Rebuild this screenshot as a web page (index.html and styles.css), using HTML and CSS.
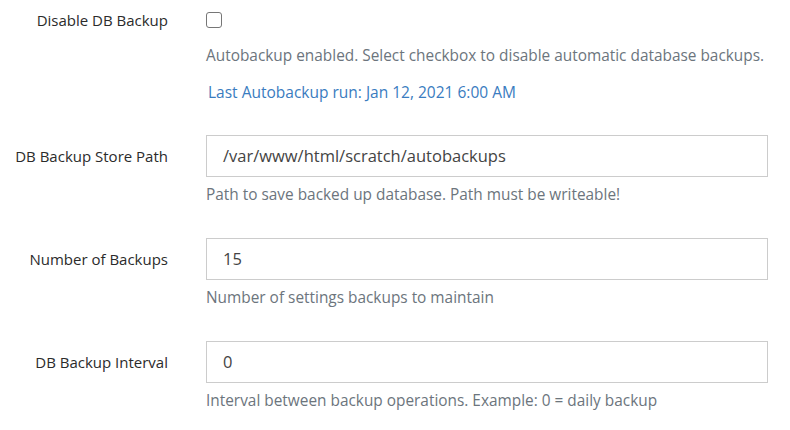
FILE: index.html
```html
<!DOCTYPE html>
<html>
<head>
<meta charset="utf-8">
<link rel="stylesheet" href="styles.css">
</head>
<body>
<form class="settings">
  <div class="row row-check">
    <label class="label" for="disable">Disable DB Backup</label>
    <div class="field">
      <span class="checkbox" id="disable"></span>
      <p class="help help-first">Autobackup enabled. Select checkbox to disable automatic database backups.</p>
      <p class="status">Last Autobackup run: Jan 12, 2021 6:00 AM</p>
    </div>
  </div>
  <div class="row">
    <label class="label">DB Backup Store Path</label>
    <div class="field">
      <div class="input">/var/www/html/scratch/autobackups</div>
      <p class="help">Path to save backed up database. Path must be writeable!</p>
    </div>
  </div>
  <div class="row">
    <label class="label">Number of Backups</label>
    <div class="field">
      <div class="input">15</div>
      <p class="help">Number of settings backups to maintain</p>
    </div>
  </div>
  <div class="row">
    <label class="label">DB Backup Interval</label>
    <div class="field">
      <div class="input">0</div>
      <p class="help">Interval between backup operations. Example: 0 = daily backup</p>
    </div>
  </div>
</form>
</body>
</html>
```
FILE: styles.css
```css
html, body {
  margin: 0;
  padding: 0;
  background: #ffffff;
}
body {
  font-family: "Open Sans", "Noto Sans", "Liberation Sans", sans-serif;
  font-size: 15px;
  color: #2b2b2b;
}
.settings {
  padding: 12px 22px 0 0;
  width: 768px;
}
.row {
  display: grid;
  grid-template-columns: 168px 562px;
  column-gap: 38px;
  margin-bottom: 33px;
}
.label {
  text-align: right;
  line-height: 42px;
  height: 42px;
  color: #2b2b2b;
  white-space: nowrap;
}
.row-check .label {
  line-height: 16px;
  height: 16px;
}
.field {
  display: flex;
  flex-direction: column;
}
.checkbox {
  display: block;
  width: 14px;
  height: 14px;
  border: 1px solid #767676;
  border-radius: 3px;
  background: #fff;
}
.help {
  margin: 8px 0 0 0;
  line-height: 20px;
  font-size: 15.4px;
  color: #6c757d;
  white-space: nowrap;
}
.help-first {
  margin-top: 18px;
}
.status {
  margin: 16px 0 0 0;
  padding-left: 2px;
  line-height: 20px;
  font-size: 15.5px;
  color: #3a7cc0;
  white-space: nowrap;
}
.input {
  box-sizing: border-box;
  height: 42px;
  border: 1px solid #cccccc;
  padding: 0 16px;
  font-size: 16.5px;
  line-height: 40px;
  color: #444444;
  background: #fff;
}
```
